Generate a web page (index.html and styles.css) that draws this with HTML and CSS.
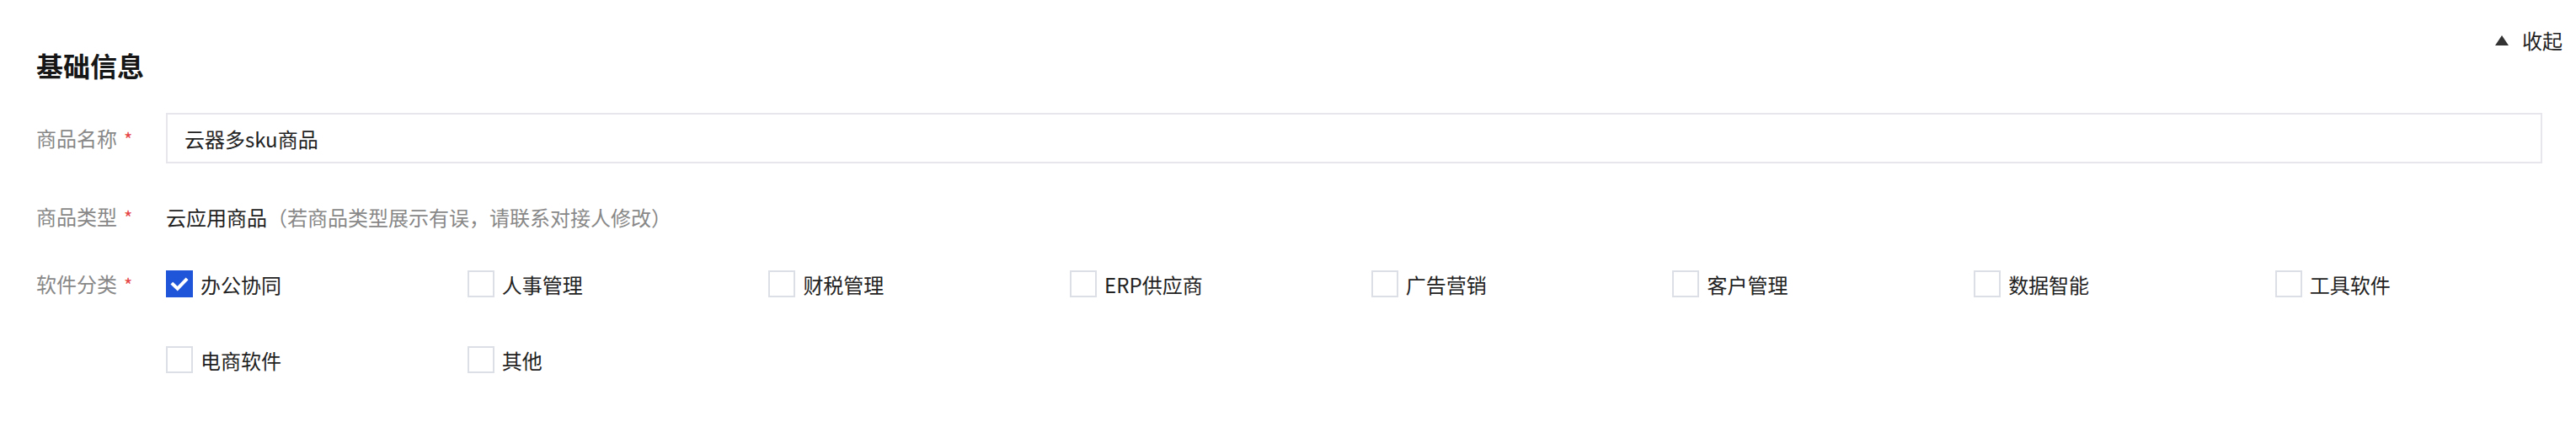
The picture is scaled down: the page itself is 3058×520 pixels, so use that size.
FILE: index.html
```html
<!DOCTYPE html>
<html lang="zh-CN">
<head>
  <meta charset="UTF-8">
  <title>基础信息</title>
  <link rel="stylesheet" href="styles.css">
</head>
<body>

<div class="panel">
  <div class="panel-head">
    <h2 class="panel-title">基础信息</h2>
    <a class="collapse-link" href="#"><span class="arrow-up"></span>收起</a>
  </div>

  <div class="form">
    <div class="form-row">
      <label class="form-label">商品名称<i class="req">*</i></label>
      <div class="form-field">
        <input class="text-input" type="text" value="云器多sku商品">
      </div>
    </div>

    <div class="form-row">
      <label class="form-label">商品类型<i class="req">*</i></label>
      <div class="form-field">
        <span class="value">云应用商品</span><span class="hint">（若商品类型展示有误，请联系对接人修改）</span>
      </div>
    </div>

    <div class="form-row form-row-top">
      <label class="form-label">软件分类<i class="req">*</i></label>
      <div class="form-field">
        <div class="check-grid">
          <label class="check checked"><span class="box"><svg viewBox="0 0 16 16"><path d="M3.6 8.3 L6.7 11.2 L12.4 5.3"/></svg></span>办公协同</label>
          <label class="check"><span class="box"></span>人事管理</label>
          <label class="check"><span class="box"></span>财税管理</label>
          <label class="check"><span class="box"></span>ERP供应商</label>
          <label class="check"><span class="box"></span>广告营销</label>
          <label class="check"><span class="box"></span>客户管理</label>
          <label class="check"><span class="box"></span>数据智能</label>
          <label class="check"><span class="box"></span>工具软件</label>
          <label class="check"><span class="box"></span>电商软件</label>
          <label class="check"><span class="box"></span>其他</label>
        </div>
      </div>
    </div>
  </div>
</div>

</body>
</html>
```

FILE: styles.css
```css
body {
  margin: 0;
  background: #fff;
  font-family: "Noto Sans CJK SC", "Noto Sans", sans-serif;
  font-size: 24px;
  color: #222;
}

.panel {
  padding: 0 16px 0 43px;
}

.panel-head {
  display: flex;
  justify-content: space-between;
  align-items: flex-start;
}

.panel-title {
  margin: 53px 0 0;
  font-size: 32px;
  line-height: 48px;
  font-weight: 700;
  color: #161616;
}

.collapse-link {
  margin-top: 30px;
  display: flex;
  align-items: center;
  gap: 16px;
  line-height: 36px;
  color: #222;
  text-decoration: none;
}

.arrow-up {
  width: 0;
  height: 0;
  border-left: 8px solid transparent;
  border-right: 8px solid transparent;
  border-bottom: 12px solid #333;
}

.form {
  margin: 33px 24px 0 0;
  display: flex;
  flex-direction: column;
  gap: 33px;
}

.form-row {
  display: flex;
  align-items: center;
  min-height: 60px;
}

.form-row-top {
  align-items: flex-start;
}

.form-label {
  width: 154px;
  flex-shrink: 0;
  color: #888;
  line-height: 36px;
}

.form-row-top .form-label {
  line-height: 34px;
}

.req {
  font-style: normal;
  color: #e54545;
  margin-left: 8px;
  font-size: 22px;
}

.form-field {
  flex: 1;
  min-width: 0;
}

.text-input {
  box-sizing: border-box;
  width: 100%;
  height: 60px;
  padding: 0 20px;
  border: 2px solid #e6e6ec;
  border-radius: 0;
  font-family: inherit;
  font-size: 24px;
  color: #222;
  outline: none;
}

.value {
  color: #222;
}

.hint {
  color: #888;
}

.check-grid {
  display: grid;
  grid-template-columns: repeat(8, 340px);
  column-gap: 17.7px;
  row-gap: 56px;
}

.check {
  display: flex;
  align-items: center;
  gap: 9px;
  height: 34px;
  white-space: nowrap;
  color: #222;
}

.box {
  box-sizing: border-box;
  width: 32px;
  height: 32px;
  border: 2px solid #dcdfe6;
  background: #fff;
  flex-shrink: 0;
}

.check.checked .box {
  border-color: #1f55d8;
  background: #1f55d8;
}

.box svg {
  display: block;
  width: 100%;
  height: 100%;
}

.box path {
  fill: none;
  stroke: #fff;
  stroke-width: 2.3;
  stroke-linecap: square;
}
```
